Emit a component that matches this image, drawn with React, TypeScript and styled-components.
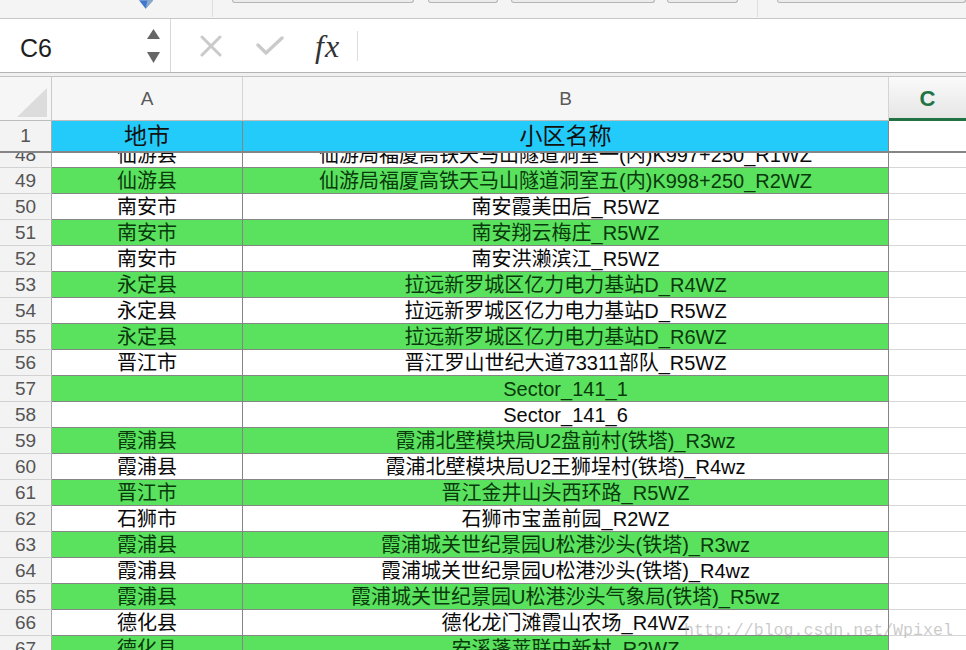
import React from 'react';
import styled, { createGlobalStyle, css } from 'styled-components';

type Fill = 'blue' | 'green' | 'white';

type Row = {
  n: number;
  city: string;
  name: string;
};

const rows: Row[] = [
  { n: 49, city: '仙游县', name: '仙游局福厦高铁天马山隧道洞室五(内)K998+250_R2WZ' },
  { n: 50, city: '南安市', name: '南安霞美田后_R5WZ' },
  { n: 51, city: '南安市', name: '南安翔云梅庄_R5WZ' },
  { n: 52, city: '南安市', name: '南安洪濑滨江_R5WZ' },
  { n: 53, city: '永定县', name: '拉远新罗城区亿力电力基站D_R4WZ' },
  { n: 54, city: '永定县', name: '拉远新罗城区亿力电力基站D_R5WZ' },
  { n: 55, city: '永定县', name: '拉远新罗城区亿力电力基站D_R6WZ' },
  { n: 56, city: '晋江市', name: '晋江罗山世纪大道73311部队_R5WZ' },
  { n: 57, city: '', name: 'Sector_141_1' },
  { n: 58, city: '', name: 'Sector_141_6' },
  { n: 59, city: '霞浦县', name: '霞浦北壁模块局U2盘前村(铁塔)_R3wz' },
  { n: 60, city: '霞浦县', name: '霞浦北壁模块局U2王狮埕村(铁塔)_R4wz' },
  { n: 61, city: '晋江市', name: '晋江金井山头西环路_R5WZ' },
  { n: 62, city: '石狮市', name: '石狮市宝盖前园_R2WZ' },
  { n: 63, city: '霞浦县', name: '霞浦城关世纪景园U松港沙头(铁塔)_R3wz' },
  { n: 64, city: '霞浦县', name: '霞浦城关世纪景园U松港沙头(铁塔)_R4wz' },
  { n: 65, city: '霞浦县', name: '霞浦城关世纪景园U松港沙头气象局(铁塔)_R5wz' },
  { n: 66, city: '德化县', name: '德化龙门滩霞山农场_R4WZ' },
  { n: 67, city: '德化县', name: '安溪蓬莱联中新村_R2WZ' },
];

const GlobalStyle = createGlobalStyle`
  html, body {
    margin: 0;
    padding: 0;
    background: #fff;
  }

  body {
    font-family: "Liberation Sans", "Noto Sans CJK SC", Arial, sans-serif;
    overflow: hidden;
  }

  * {
    box-sizing: border-box;
  }
`;

const Window = styled.div`
  position: relative;
  width: 966px;
  height: 650px;
  overflow: hidden;

  display: flex;
  flex-flow: column nowrap;
`;

// ribbon (only its bottom edge is visible)
const Ribbon = styled.div`
  flex: 0 0 19px;
  display: flex;
  align-items: flex-start;
  padding-left: 139px;
  background: #f4f4f4;
  border-bottom: 1px solid #c6c6c6;
`;

const RibbonSep = styled.div<{ $ml: number }>`
  margin-left: ${(p) => p.$ml}px;
  width: 1px;
  height: 17px;
  background: #dedede;
`;

const RibbonButton = styled.div<{ $ml: number; $w: number }>`
  margin-left: ${(p) => p.$ml}px;
  width: ${(p) => p.$w}px;
  height: 3px;
  background: #ebebeb;
  border: 1px solid #b5b5b5;
  border-top: none;
  border-radius: 0 0 4px 4px;
`;

// formula bar
const FormulaBar = styled.div`
  flex: 0 0 54px;
  display: flex;
  align-items: stretch;
  background: #fff;
  border-bottom: 1px solid #b4b4b4;
`;

const NameBox = styled.div`
  width: 171px;
  display: flex;
  align-items: center;
  justify-content: space-between;
  padding: 0 10px 0 20px;
  border-right: 1px solid #d8d8d8;
  font-size: 25px;
  color: #1e1e1e;

  span {
    padding-top: 5px;
  }
`;

const FormulaIcon = styled.div<{ $ml: number }>`
  margin-left: ${(p) => p.$ml}px;
  display: flex;
  align-items: center;
`;

const Fx = styled.span`
  font-family: "Liberation Serif", "Times New Roman", serif;
  font-style: italic;
  font-size: 32px;
  letter-spacing: 1px;
  color: #333;
  line-height: 1;
`;

const FormulaSep = styled.div`
  margin-left: 17px;
  align-self: center;
  width: 1px;
  height: 30px;
  background: #dcdcdc;
`;

const Gap = styled.div`
  flex: 0 0 4px;
  background: #f0f0f0;
  border-bottom: 1px solid #c4c4c4;
`;

// sheet
const columns = css`
  display: grid;
  grid-template-columns: 52px 191px 646px 1fr;
`;

const HeaderRow = styled.div`
  ${columns};
  flex: 0 0 44px;
  background: #f6f6f6;
`;

const Corner = styled.div`
  display: flex;
  align-items: flex-end;
  justify-content: flex-end;
  padding: 0 4px 3px 0;
  border-right: 1px solid #c9c9c9;
  border-bottom: 1px solid #bdbdbd;
`;

const ColHead = styled.div<{ $active?: boolean }>`
  display: flex;
  align-items: center;
  justify-content: center;
  font-size: 19px;
  color: #5a5a5a;
  border-right: 1px solid #d4d4d4;
  border-bottom: 1px solid #bdbdbd;

  ${(p) =>
    p.$active &&
    css`
      background: linear-gradient(#fafafa, #e6e6e6);
      color: #217346;
      font-weight: bold;
      font-size: 22px;
      padding-top: 2px;
      border-right: none;
      border-bottom: 3px solid #217346;
    `}
`;

const SheetRow = styled.div<{ $h: number; $line?: number }>`
  ${columns};
  flex: 0 0 ${(p) => p.$h}px;
  height: ${(p) => p.$h}px;

  & > * {
    border-bottom-width: ${(p) => p.$line ?? 1}px;
  }
`;

const Clip = styled.div`
  flex: 0 0 15px;
  display: flex;
  flex-flow: column nowrap;
  justify-content: flex-end;
  overflow: hidden;
`;

const RowHead = styled.div<{ $frozen?: boolean }>`
  display: flex;
  align-items: center;
  justify-content: center;
  background: #f3f3f3;
  font-size: 19px;
  color: #555;
  border-right: 1px solid #a9a9a9;
  border-bottom-style: solid;
  border-bottom-color: ${(p) => (p.$frozen ? '#858585' : '#d2d2d2')};
`;

const fills: Record<Fill, { bg: string; fg: string }> = {
  blue: { bg: '#22cbfa', fg: '#111' },
  green: { bg: '#5ae15e', fg: '#093a0c' },
  white: { bg: '#fff', fg: '#0a0a0a' },
};

const Cell = styled.div<{ $fill: Fill }>`
  display: flex;
  align-items: center;
  justify-content: center;
  overflow: hidden;
  white-space: nowrap;

  background: ${(p) => fills[p.$fill].bg};
  color: ${(p) => fills[p.$fill].fg};
  font-size: ${(p) => (p.$fill === 'blue' ? 23 : 20)}px;
  line-height: 1;

  border-right: 1px solid #858585;
  border-bottom-style: solid;
  border-bottom-color: #858585;
`;

const Blank = styled.div<{ $frozen?: boolean }>`
  background: #fff;
  border-bottom-style: solid;
  border-bottom-color: ${(p) => (p.$frozen ? '#858585' : '#d6d6d6')};
`;

const Watermark = styled.div`
  position: absolute;
  left: 684px;
  top: 621px;
  font-family: "Liberation Mono", "DejaVu Sans Mono", monospace;
  font-size: 16.6px;
  color: rgba(150, 150, 150, 0.5);
  white-space: nowrap;
  pointer-events: none;
`;

const Diamond = () => (
  <svg width="15" height="10" viewBox="0 0 15 10">
    <polygon points="0,0 15,0 7,9" fill="#3f78cc" />
    <polygon points="9,0 15,0 7,9" fill="#8fa9c9" />
  </svg>
);

const Stepper = () => (
  <svg width="13" height="34" viewBox="0 0 13 34">
    <polygon points="0,10 13,10 6.5,0" fill="#666" />
    <polygon points="0,23 13,23 6.5,34" fill="#666" />
  </svg>
);

const CancelIcon = () => (
  <svg width="22" height="22" viewBox="0 0 22 22">
    <path d="M2 2 L20 20 M20 2 L2 20" stroke="#cacaca" strokeWidth="3" strokeLinecap="round" />
  </svg>
);

const EnterIcon = () => (
  <svg width="28" height="20" viewBox="0 0 28 20">
    <path d="M2 9 L10 17 L26 2" stroke="#cacaca" strokeWidth="3.4" fill="none" strokeLinecap="round" />
  </svg>
);

const CornerMark = () => (
  <svg width="30" height="29" viewBox="0 0 30 29">
    <polygon points="0,29 30,29 30,0" fill="#dcdcdc" />
  </svg>
);

const DataRow = ({ row, fill }: { row: Row; fill: Fill }) => (
  <SheetRow $h={26}>
    <RowHead>{row.n}</RowHead>
    <Cell $fill={fill}>{row.city}</Cell>
    <Cell $fill={fill}>{row.name}</Cell>
    <Blank />
  </SheetRow>
);

const App = () => (
  <Window>
    <GlobalStyle />

    <Ribbon>
      <Diamond />
      <RibbonSep $ml={59} />
      <RibbonButton $ml={19} $w={192} />
      <RibbonButton $ml={14} $w={74} />
      <RibbonButton $ml={13} $w={152} />
      <RibbonButton $ml={12} $w={75} />
      <RibbonSep $ml={19} />
      <RibbonButton $ml={19} $w={200} />
    </Ribbon>

    <FormulaBar>
      <NameBox>
        <span>C6</span>
        <Stepper />
      </NameBox>
      <FormulaIcon $ml={29}><CancelIcon /></FormulaIcon>
      <FormulaIcon $ml={34}><EnterIcon /></FormulaIcon>
      <FormulaIcon $ml={31}><Fx>fx</Fx></FormulaIcon>
      <FormulaSep />
    </FormulaBar>
    <Gap />

    <HeaderRow>
      <Corner><CornerMark /></Corner>
      <ColHead>A</ColHead>
      <ColHead>B</ColHead>
      <ColHead $active>C</ColHead>
    </HeaderRow>

    {/* frozen row 1 */}
    <SheetRow $h={32} $line={2}>
      <RowHead $frozen>1</RowHead>
      <Cell $fill="blue">地市</Cell>
      <Cell $fill="blue">小区名称</Cell>
      <Blank $frozen />
    </SheetRow>

    {/* row 48 is scrolled half under the frozen pane */}
    <Clip>
      <DataRow
        row={{ n: 48, city: '仙游县', name: '仙游局福厦高铁天马山隧道洞室一(内)K997+250_R1WZ' }}
        fill="white"
      />
    </Clip>

    {rows.map((row) => (
      <DataRow key={row.n} row={row} fill={row.n % 2 ? 'green' : 'white'} />
    ))}

    <Watermark>http://blog.csdn.net/Wpixel</Watermark>
  </Window>
);

export default App;
